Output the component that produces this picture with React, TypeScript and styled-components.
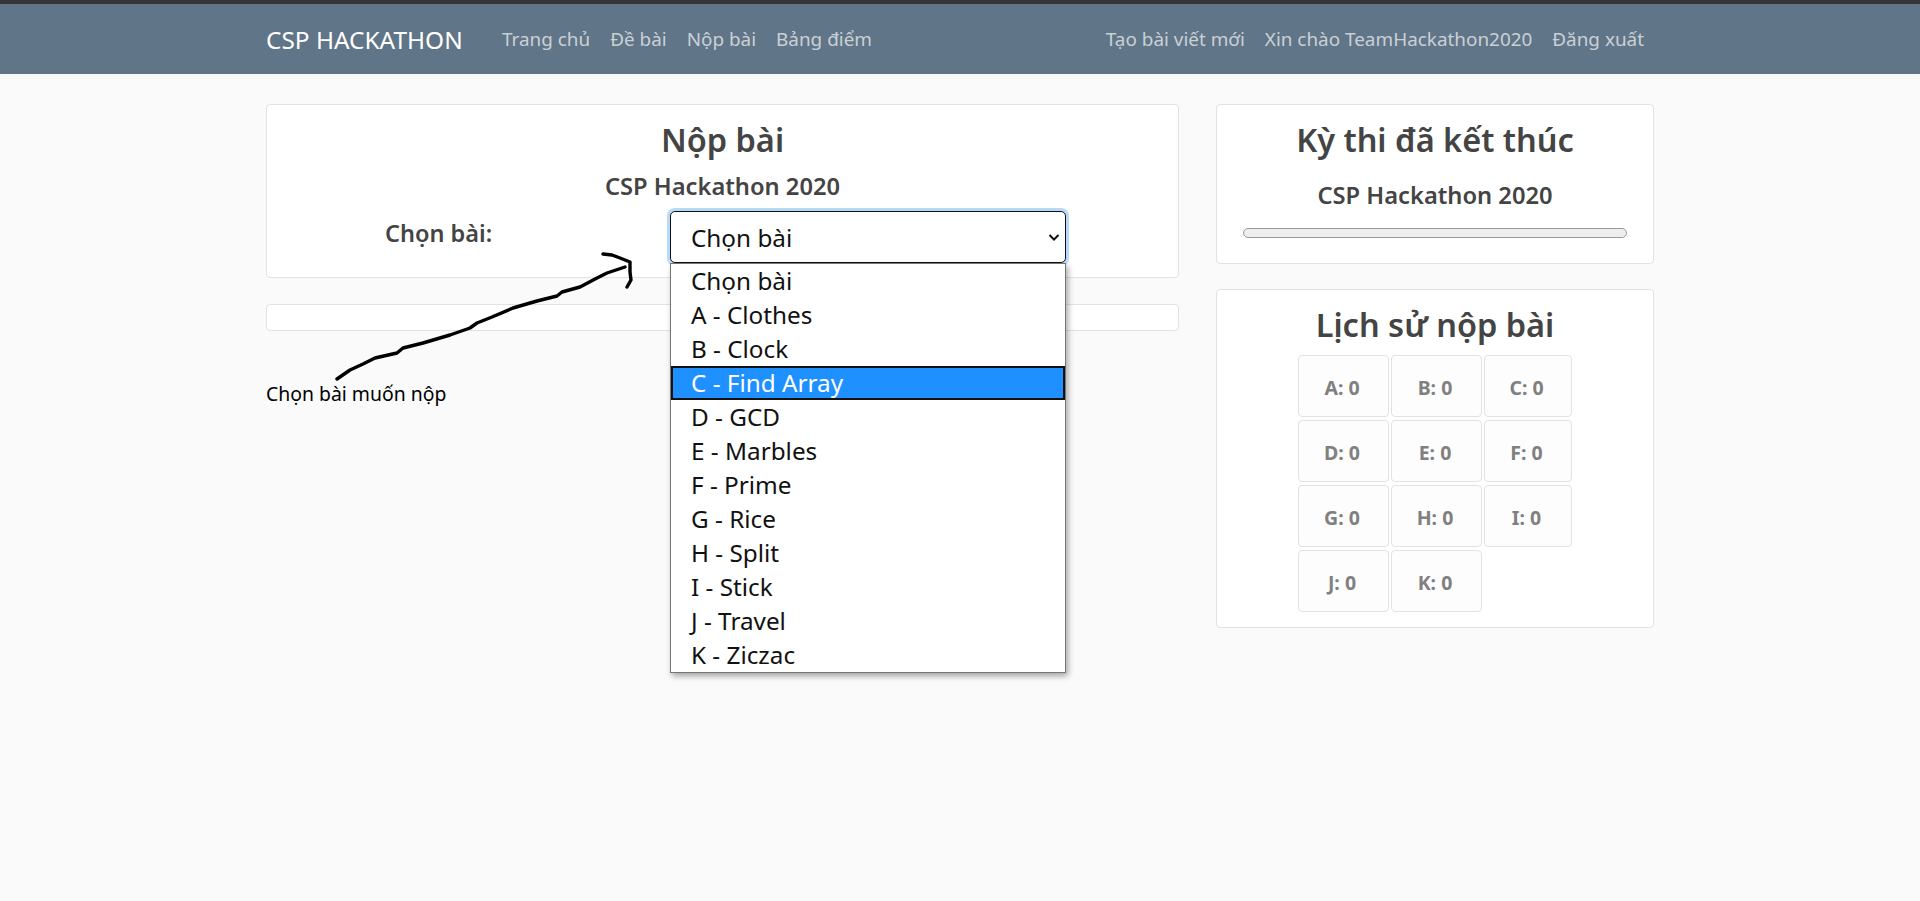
import React from "react";
import styled, { createGlobalStyle } from "styled-components";

const FONT = `"Noto Sans", "Open Sans", sans-serif`;

const Global = createGlobalStyle`
  html, body { margin: 0; padding: 0; min-height: 901px; background: #fafafa; font-family: ${FONT}; color: #444; }
  #root { min-height: 901px; }
  * { box-sizing: border-box; }
`;

const TopStripe = styled.div`height: 4px; background: #343538;`;
const Navbar = styled.nav`height: 70px; background: #607587;`;
const Container = styled.div`width: 1388px; margin: 0 auto;`;
const NavInner = styled(Container)`display: flex; align-items: center; height: 70px;`;
const Brand = styled.a`font-size: 24.4px; color: #fff; width: 226px; white-space: nowrap;`;
const NavGroup = styled.div<{ $right?: boolean }>`display: flex; margin-left: ${p => (p.$right ? "auto" : "0")};`;
const NavLink = styled.a`font-size: 18.9px; color: rgba(255,255,255,.68); padding: 0 10px; white-space: nowrap;`;

const Main = styled(Container)`
  display: grid; grid-template-columns: 913px 438px; column-gap: 37px; padding-top: 30px; position: relative;
`;
const Column = styled.div`display: flex; flex-direction: column; align-items: stretch;`;
const Card = styled.section`background: #fff; border: 1px solid #e2e2e2; border-radius: 4px;`;
const SubmitCard = styled(Card)`height: 174px; padding-top: 12px; text-align: center; position: relative;`;
const Title = styled.h2`margin: 0; font-size: 32.5px; line-height: 46px; font-weight: 600; text-align: center; color: #444;`;
const Subtitle = styled.h4`margin: 4px 0 0; font-size: 23.7px; line-height: 38px; font-weight: 600; text-align: center; color: #444;`;
const FormRow = styled.div`display: flex; margin-top: 6px; padding-left: 118px; align-items: flex-start;`;
const Label = styled.label`font-size: 23.5px; font-weight: 600; width: 285px; margin-top: 2px; text-align: left; line-height: 40px; color: #444;`;
const SelectWrap = styled.div`position: relative; width: 396px; z-index: 2;`;
const SelectBox = styled.div`
  height: 52px; border: 1px solid #111; border-radius: 5px; background: #fff;
  box-shadow: 0 0 0 3px #b9d9fb; display: flex; align-items: center; justify-content: space-between;
  padding: 0 4px 0 20px; font-size: 24.3px; color: #111;
`;
const DropList = styled.ul`
  position: absolute; left: 0; top: 52px; width: 396px; height: 410px; margin: 0; padding: 0;
  list-style: none; background: #fff; border: 1px solid #767676; box-shadow: 2px 3px 6px rgba(0,0,0,.35); text-align: left;
`;
const DropItem = styled.li<{ $active?: boolean }>`
  height: 34px; padding-left: ${p => p.$active ? "18px" : "20px"}; font-size: 24.3px; line-height: ${p => p.$active ? "30px" : "34px"};
  color: ${p => p.$active ? "#fff" : "#111"}; background: ${p => p.$active ? "#1e90ff" : "#fff"};
  border: ${p => p.$active ? "2px solid #111" : "0"}; white-space: nowrap;
`;
const ThinCard = styled(Card)`height: 27px; margin-top: 26px;`;
const Note = styled.p`margin: 50px 0 0; font-size: 19.4px; line-height: 26px; color: #000;`;
const Sketch = styled.svg`position: absolute; left: 0; top: 0; pointer-events: none; z-index: 1;`;

const ContestCard = styled(Card)`height: 160px; padding: 12px 26px 0; text-align: center;`;
const ContestName = styled(Subtitle)`margin-top: 13px;`;
const Progress = styled.div`height: 10px; margin-top: 14px; background: #eee; border: 1px solid #999; border-radius: 5px;`;
const HistoryCard = styled(Card)`height: 339px; margin-top: 25px; padding-top: 12px;`;
const Grid = styled.div`display: grid; grid-template-columns: 91px 91px 88px; grid-auto-rows: 62px; gap: 3px 2px; margin: 7px 0 0 81px;`;
const Cell = styled.div`
  display: flex; align-items: center; justify-content: center; padding: 3px 3px 0 0; background: #fdfdfd;
  border: 1px solid #e2e2e2; border-radius: 4px; font-size: 19.5px; font-weight: 700; color: #808080;
`;

const options = ["Chọn bài","A - Clothes","B - Clock","C - Find Array","D - GCD","E - Marbles","F - Prime","G - Rice","H - Split","I - Stick","J - Travel","K - Ziczac"];
const cells = ["A: 0","B: 0","C: 0","D: 0","E: 0","F: 0","G: 0","H: 0","I: 0","J: 0","K: 0"];

export default function App() {
  return (
    <>
      <Global />
      <TopStripe />
      <Navbar>
        <NavInner>
          <Brand>CSP HACKATHON</Brand>
          <NavGroup>
            <NavLink>Trang chủ</NavLink>
            <NavLink>Đề bài</NavLink>
            <NavLink>Nộp bài</NavLink>
            <NavLink>Bảng điểm</NavLink>
          </NavGroup>
          <NavGroup $right>
            <NavLink>Tạo bài viết mới</NavLink>
            <NavLink>Xin chào TeamHackathon2020</NavLink>
            <NavLink>Đăng xuất</NavLink>
          </NavGroup>
        </NavInner>
      </Navbar>
      <Main>
        <Column>
          <SubmitCard>
            <Title>Nộp bài</Title>
            <Subtitle>CSP Hackathon 2020</Subtitle>
            <FormRow>
              <Label>Chọn bài:</Label>
              <SelectWrap>
                <SelectBox>
                  Chọn bài
                  <svg width="14" height="14" viewBox="0 0 14 14" fill="none" stroke="#111" strokeWidth="2">
                    <path d="M2.5 5l4.5 4.5L11.5 5" />
                  </svg>
                </SelectBox>
                <DropList>
                  {options.map(o => <DropItem key={o} $active={o.startsWith("C -")}>{o}</DropItem>)}
                </DropList>
              </SelectWrap>
            </FormRow>
          </SubmitCard>
          <ThinCard />
          <Note>Chọn bài muốn nộp</Note>
        </Column>
        <Column>
          <ContestCard>
            <Title>Kỳ thi đã kết thúc</Title>
            <ContestName>CSP Hackathon 2020</ContestName>
            <Progress />
          </ContestCard>
          <HistoryCard>
            <Title>Lịch sử nộp bài</Title>
            <Grid>
              {cells.map(c => <Cell key={c}>{c}</Cell>)}
            </Grid>
          </HistoryCard>
        </Column>
        <Sketch width="400" height="320" viewBox="266 74 400 320">
          <path d="M337 379 L350 370 L363 364 L375 358 L397 353 L403 348 L423 343 L450 335 L470 328 L477 323 L492 317 L513 308 L537 301 L557 296 L562 292 L580 287 L597 278 L607 273 L625 267"
            fill="none" stroke="#000" strokeWidth="3.4" strokeLinecap="round" strokeLinejoin="round" />
          <path d="M603 254 L612 255 L620 258 L630 262 L630 272 L631 280 L627 287" fill="none" stroke="#000" strokeWidth="3.4" strokeLinecap="round" strokeLinejoin="round" />
        </Sketch>
      </Main>
    </>
  );
}
